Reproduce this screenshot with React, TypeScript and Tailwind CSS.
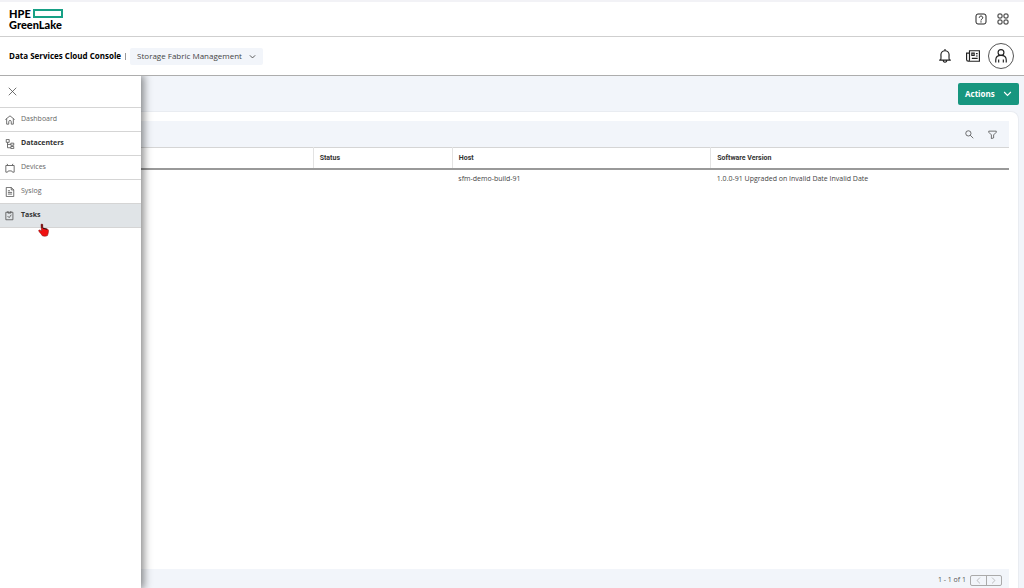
import type { ReactNode } from "react";
import clsx from "clsx";

type IconProps = {
  className?: string;
  strokeWidth?: number;
  children: ReactNode;
};

function Icon({ className = "h-3 w-3", strokeWidth = 2, children }: IconProps) {
  return (
    <svg
      viewBox="0 0 24 24"
      fill="none"
      stroke="currentColor"
      strokeWidth={strokeWidth}
      aria-hidden="true"
      className={clsx("shrink-0", className)}
    >
      {children}
    </svg>
  );
}

function ChevronDown({ className }: { className?: string }) {
  return (
    <Icon className={className} strokeWidth={3}>
      <path d="m3 8 9 9 9-9" />
    </Icon>
  );
}

function PointerIcon() {
  return (
    <svg viewBox="0 0 22 26" aria-hidden="true" className="absolute top-[223px] left-[38px] z-20 h-[14px] w-[11px]">
      <path
        d="M6 2.5c0-2 3.500-2 3.500 0V9l8.500 2c2 .5 3 1.500 3 3.500 0 4-1 6-2 9.500-3 2-8 2-11 0-1-3-5-6-6.500-9-.8-2 1.500-3 3-1.500L7 15Z"
        fill="#f01212"
        stroke="#7a0c0c"
        strokeWidth="1"
      />
      <path d="M8 1.500V9M10 9.500l8 2" stroke="#2b1010" strokeWidth="2" />
    </svg>
  );
}

type NavItem = {
  label: string;
  href: string;
  icon: ReactNode;
  bold?: boolean;
  active?: boolean;
};

const navItems: NavItem[] = [
  {
    label: "Dashboard",
    href: "#dashboard",
    icon: <path d="M1 11 12 2l11 9M4 9v13h5v-6c0-4 6-4 6 0v6h5V9" />,
  },
  {
    label: "Datacenters",
    href: "#datacenters",
    bold: true,
    icon: <path d="M3 1h7v7H3zM14 10h7v5h-7zM14 18h7v5h-7zM6 8v13h8M6 13h8" />,
  },
  {
    label: "Devices",
    href: "#devices",
    icon: <path d="M2 6h20v16h-4l-2-3H8l-2 3H2zM7 6 5 2M17 6l2-4" />,
  },
  {
    label: "Syslog",
    href: "#syslog",
    icon: <path d="M3 1h12l6 6v16H3zM15 1v6h6M7 9h5M7 13h10M7 17h10" />,
  },
  {
    label: "Tasks",
    href: "#tasks",
    bold: true,
    active: true,
    icon: <path d="M2 3h17v18H2zM7 0v5h7V0M6 12l4 4 5-7" />,
  },
];

const columns = [
  { label: "", width: "w-[30%]" },
  { label: "Status", width: "w-[14%]" },
  { label: "Host", width: "w-[26%]" },
  { label: "Software Version", width: "w-[30%]" },
];

const rows = [["", "", "sfm-demo-build-91", "1.0.0-91 Upgraded on Invalid Date Invalid Date"]];

function TopBar() {
  return (
    <header className="flex h-[37px] items-center justify-between border-t-2 border-b border-t-[#f2f2f6] border-b-[#cfcfcf] pr-[15px] pl-[9px]">
      <a href="#home" className="block font-['Lato',sans-serif] text-[11px] leading-[11px] font-black text-black">
        <span className="flex items-center gap-0.5">
          HPE
          <span className="h-[9px] w-[30px] border-2 border-[#17a085]" />
        </span>
        <span className="block">GreenLake</span>
      </a>
      <div className="flex items-center gap-2.5 text-[#222]">
        <button type="button" aria-label="Help">
          <Icon>
            <rect x="2" y="2" width="20" height="20" rx="4" />
            <path d="M8.500 9.500C8.500 5 15.500 5 15.500 9.500c0 2.500-3.500 2.500-3.500 5.500M12 16.500V19" />
          </Icon>
        </button>
        <button type="button" aria-label="Apps">
          <Icon>
            <rect x="2" y="2" width="8" height="8" rx="2" />
            <rect x="14" y="2" width="8" height="8" rx="2" />
            <rect x="2" y="14" width="8" height="8" rx="2" />
            <rect x="14" y="14" width="8" height="8" rx="2" />
          </Icon>
        </button>
      </div>
    </header>
  );
}

function ServiceBar() {
  return (
    <div className="flex h-[39px] items-center justify-between border-b border-[#adadad] pr-2.5 pl-[9px]">
      <div className="flex items-center">
        <span className="text-[8px] font-bold text-black">Data Services Cloud Console</span>
        <span className="mx-1 h-[7px] w-px bg-[#999]" />
        <button
          type="button"
          className="flex h-[17px] w-[133px] items-center justify-between rounded-xs bg-[#f2f5fa] pr-[7px] pl-[7px] text-[8px] whitespace-nowrap text-[#444]"
        >
          Storage Fabric Management
          <ChevronDown className="h-[7px] w-[7px]" />
        </button>
      </div>
      <div className="flex items-center text-[#222]">
        <button type="button" aria-label="Notifications" className="mr-3.5">
          <Icon className="h-3.5 w-3.5">
            <path d="M2 19h20M4 19c2-2 1-5 1-9a7 7 0 0 1 14 0c0 4-1 7 1 9M9 19c0 5 6 5 6 0M12 3V0" />
          </Icon>
        </button>
        <button type="button" aria-label="News" className="mr-2">
          <Icon className="h-3.5 w-3.5">
            <path d="M6 3h17v18H4c-2 0-3-1-3-3V7h5zM6 7v11c0 2-1 3-2 3M10 7h4v4h-4zM17 8h3M17 12h3M10 16h10" />
          </Icon>
        </button>
        <button
          type="button"
          aria-label="Account"
          className="flex h-[26px] w-[26px] items-center justify-center rounded-full border border-[#555]"
        >
          <Icon className="h-3.5 w-3.5">
            <circle cx="12" cy="6" r="5" />
            <path d="M3 23v-4c0-5 3-8 9-8s9 3 9 8v4M8 23v-5M16 23v-5" />
          </Icon>
        </button>
      </div>
    </div>
  );
}

function NavDrawer() {
  return (
    <nav
      aria-label="Main"
      className="absolute inset-y-0 left-0 z-10 w-[141px] bg-white shadow-[2px_0_8px_1px_rgba(0,0,0,0.45)]"
    >
      <div className="flex h-8 items-center border-b border-[#d5d5d5] pl-2">
        <button type="button" aria-label="Close menu" className="text-[#444]">
          <Icon className="h-[9px] w-[9px]">
            <path d="m2 2 20 20M22 2 2 22" />
          </Icon>
        </button>
      </div>
      <ul>
        {navItems.map((item) => (
          <li key={item.label}>
            <a
              href={item.href}
              aria-current={item.active ? "page" : undefined}
              className={clsx(
                "flex h-6 items-center gap-1.5 border-b border-[#d5d5d5] pl-[5px] text-[7px]",
                item.bold ? "font-bold text-[#333]" : "text-[#666]",
                item.active && "bg-[#e0e4e7]",
              )}
            >
              <Icon className="h-2.5 w-2.5 text-[#555]">{item.icon}</Icon>
              {item.label}
            </a>
          </li>
        ))}
      </ul>
    </nav>
  );
}

function FabricTable() {
  return (
    <table className="w-full table-fixed text-left text-[7px] text-[#444]">
      <thead>
        <tr className="h-[21px] border-t border-b-2 border-t-[#d5d5d5] border-b-[#999]">
          {columns.map((column, index) => (
            <th
              key={index}
              scope="col"
              className={clsx(
                "pl-1.5 font-['Roboto',sans-serif] font-bold text-[#333]",
                column.width,
                index > 0 && "border-l border-l-[#e3e3e3]",
              )}
            >
              {column.label}
            </th>
          ))}
        </tr>
      </thead>
      <tbody>
        {rows.map((row, rowIndex) => (
          <tr key={rowIndex} className="h-5">
            {row.map((cell, index) => (
              <td key={index} className="pl-1.5 whitespace-nowrap">
                {cell}
              </td>
            ))}
          </tr>
        ))}
      </tbody>
    </table>
  );
}

function Pager() {
  return (
    <div className="flex h-[19px] items-center justify-end gap-1 bg-[#f2f5fa] pt-1 pr-[7px] text-[7px] text-[#555]">
      <span>1 - 1 of 1</span>
      <div className="flex h-[11px] w-8 divide-x divide-[#aaa] rounded-xs border border-[#aaa]">
        <button type="button" aria-label="Previous page" className="flex flex-1 items-center justify-center">
          <Icon className="h-[7px] w-[7px] text-[#999]">
            <path d="m17 2-10 10 10 10" />
          </Icon>
        </button>
        <button type="button" aria-label="Next page" className="flex flex-1 items-center justify-center">
          <Icon className="h-[7px] w-[7px] text-[#999]">
            <path d="m7 2 10 10L7 22" />
          </Icon>
        </button>
      </div>
    </div>
  );
}

export default function App() {
  return (
    <div className="flex min-h-screen flex-col bg-white font-['Open_Sans','Noto_Sans',sans-serif]">
      <TopBar />
      <ServiceBar />
      <div className="relative flex flex-1 flex-col overflow-hidden bg-[#f2f5fa] px-[5px]">
        <NavDrawer />
        <div className="flex h-[35px] items-center justify-end">
          <button
            type="button"
            className="flex h-[22px] w-[61px] items-center justify-between rounded-xs bg-[#17967f] px-[7px] text-[8px] font-bold text-white"
          >
            Actions
            <ChevronDown className="h-[9px] w-[9px]" />
          </button>
        </div>
        <main className="flex flex-1 flex-col rounded-t-lg border-t border-r border-[#e9ecf1] bg-white pt-[9px] pr-[9px] pl-2.5">
          <div className="flex h-[26px] items-center justify-end gap-3.5 bg-[#f2f5fa] pr-3 text-[#444]">
            <button type="button" aria-label="Search">
              <Icon className="h-[9px] w-[9px]">
                <circle cx="9" cy="9" r="7" />
                <path d="m14 14 8 8" />
              </Icon>
            </button>
            <button type="button" aria-label="Filter">
              <Icon className="h-[9px] w-[9px]">
                <path d="M2 3h20v3l-7 7v8l-6 2V13L2 6z" />
              </Icon>
            </button>
          </div>
          <div className="flex-1">
            <FabricTable />
          </div>
          <Pager />
        </main>
      </div>
      <PointerIcon />
    </div>
  );
}
